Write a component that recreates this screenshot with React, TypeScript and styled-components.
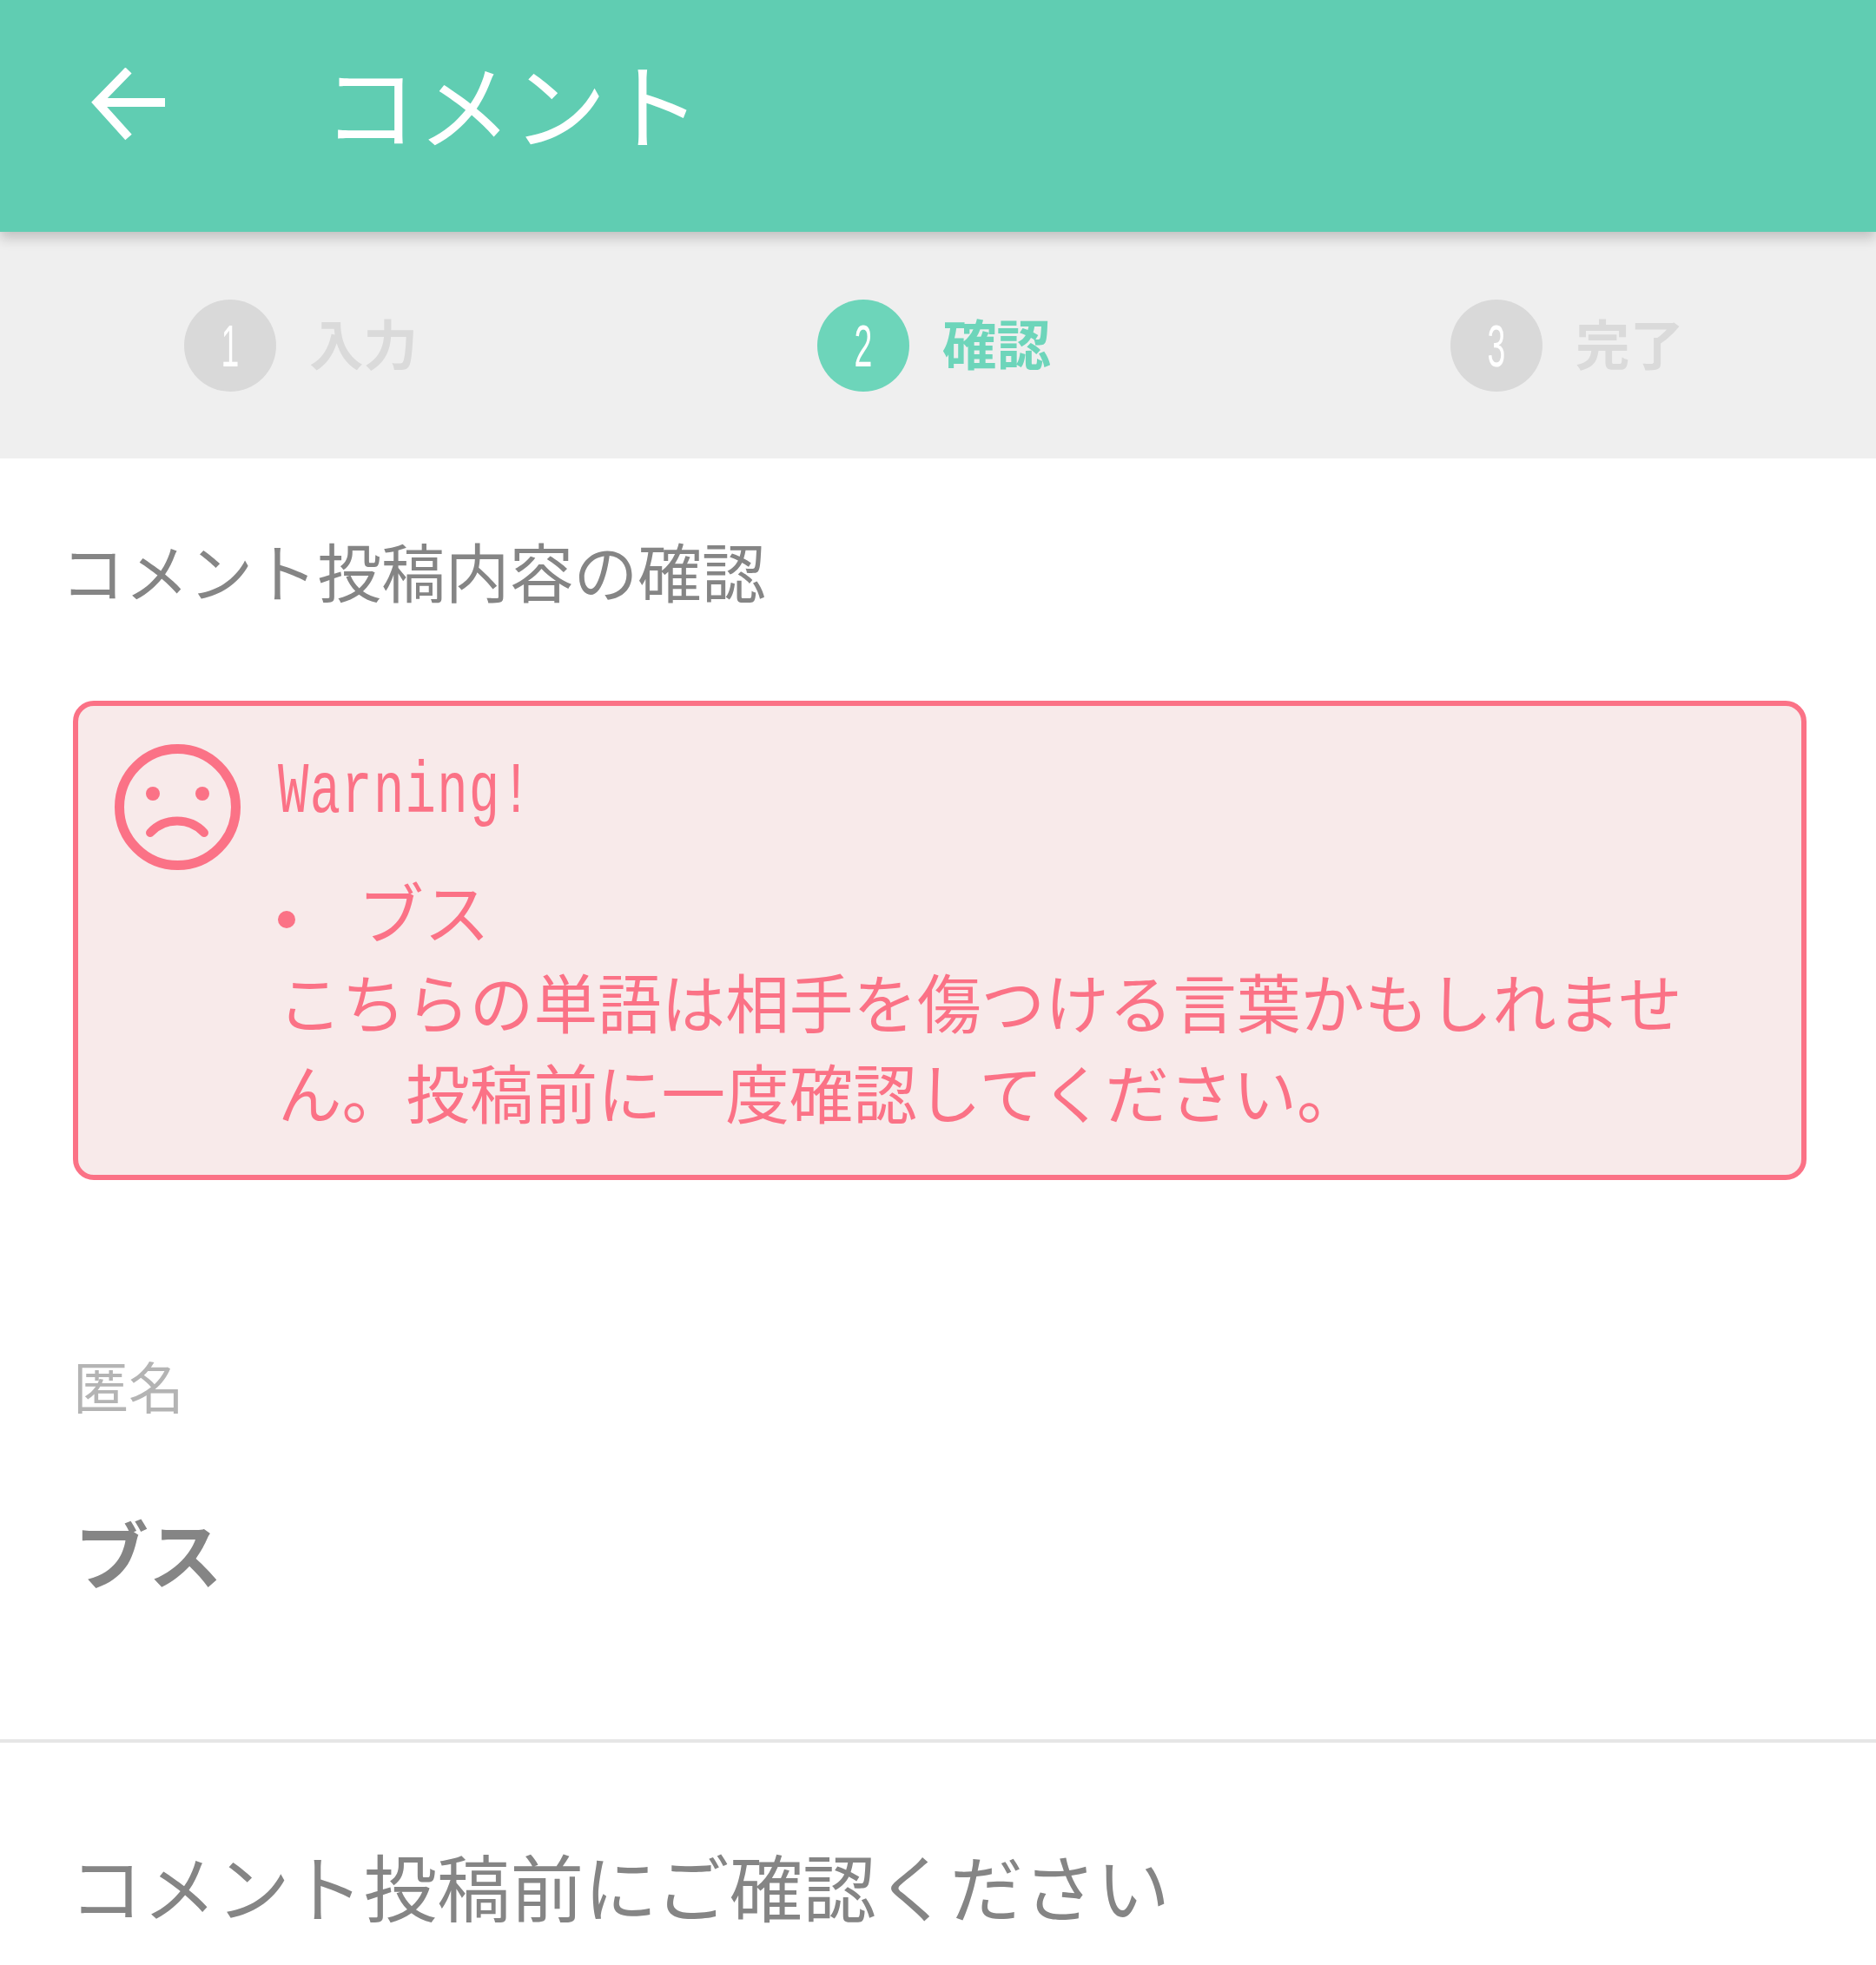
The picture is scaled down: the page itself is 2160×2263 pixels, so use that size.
import styled, { createGlobalStyle } from "styled-components";

const GlobalStyle = createGlobalStyle`
  html, body {
    margin: 0;
    padding: 0;
    background: #ffffff;
    overflow: hidden;
  }
  body {
    font-family: "Noto Sans CJK JP", "Noto Sans", sans-serif;
  }
`;

const Page = styled.div`
  width: 2160px;
  height: 2263px;
  overflow: hidden;
  background: #ffffff;
`;

const Header = styled.header`
  position: relative;
  z-index: 1;
  height: 267px;
  display: flex;
  align-items: flex-start;
  padding-left: 104px;
  background: #60cdb2;
  box-shadow: 0 7px 14px rgba(0, 0, 0, 0.2);
`;

const BackIcon = styled.svg`
  width: 90px;
  height: 90px;
  margin-top: 78px;
  flex: none;
`;

const HeaderTitle = styled.h1`
  margin: 59px 0 0 178px;
  font-size: 108px;
  line-height: 116px;
  font-weight: 400;
  color: #ffffff;
  letter-spacing: 1px;
`;

const Steps = styled.div`
  height: 261px;
  display: flex;
  align-items: center;
  gap: 461px;
  padding-left: 212px;
  background: #efefef;
`;

const Step = styled.div`
  width: 268px;
  display: flex;
  align-items: center;
  gap: 38px;
`;

const StepCircle = styled.span<{ $active?: boolean }>`
  width: 106px;
  height: 106px;
  flex: none;
  display: flex;
  align-items: center;
  justify-content: center;
  border-radius: 50%;
  background: ${(p) => (p.$active ? "#6dd5ba" : "#d9d9d9")};
  color: #ffffff;
  font-family: "Liberation Sans", sans-serif;
  font-size: 68px;
`;

const Digit = styled.span`
  display: block;
  transform: scaleX(0.55);
`;

const StepLabel = styled.span<{ $active?: boolean }>`
  margin-top: -8px;
  font-size: 62.5px;
  line-height: 70px;
  font-weight: 700;
  white-space: nowrap;
  color: ${(p) => (p.$active ? "#6dd5ba" : "#dadada")};
`;

const Content = styled.main`
  padding: 0 80px 0 76px;
`;

const SectionTitle = styled.h2`
  margin: 88px 0 0 -6px;
  font-size: 73.8px;
  line-height: 80px;
  font-weight: 400;
  color: #858585;
`;

const WarningBox = styled.section`
  box-sizing: border-box;
  width: 1996px;
  height: 552px;
  margin: 111px 0 0 8px;
  padding: 43px 70px 0 41px;
  display: flex;
  gap: 42px;
  border: 6px solid #fb7286;
  border-radius: 24px;
  background: #f8eaea;
  color: #fb7286;
`;

const Face = styled.svg`
  width: 147px;
  height: 147px;
  flex: none;
`;

const WarningBody = styled.div`
  min-width: 0;
`;

const WarningTitle = styled.div`
  margin-top: 21px;
  font-family: "Liberation Mono", "DejaVu Sans Mono", monospace;
  font-size: 83px;
  line-height: 72px;
  letter-spacing: 1.8px;
  white-space: nowrap;
  transform: scaleX(0.71);
  transform-origin: left center;
`;

const WordRow = styled.div`
  margin-top: 47px;
  display: flex;
  align-items: center;
  font-size: 76px;
  line-height: 104px;
`;

const Bullet = styled.span`
  width: 20px;
  height: 20px;
  flex: none;
  margin: 22px 72px 0 0;
  border-radius: 50%;
  background: #fb7286;
`;

const WarningText = styled.p`
  margin: 0;
  font-size: 73.6px;
  line-height: 104px;
`;

const FieldLabel = styled.div`
  margin: 195px 0 0 8px;
  font-size: 64px;
  line-height: 80px;
  color: #b4b4b4;
`;

const FieldValue = styled.div`
  margin: 108px 0 0 10px;
  font-size: 85px;
  line-height: 90px;
  font-weight: 700;
  color: #858585;
`;

const Divider = styled.hr`
  margin: 171px 0 0;
  height: 4px;
  border: 0;
  background: #e6e6e6;
`;

const NoteTitle = styled.h2`
  margin: 115px 0 0 80px;
  font-size: 84.6px;
  line-height: 96px;
  font-weight: 400;
  color: #858585;
`;

const steps = [
  { n: 1, label: "入力" },
  { n: 2, label: "確認", active: true },
  { n: 3, label: "完了" },
];

export default function App() {
  return (
    <Page>
      <GlobalStyle />
      <Header>
        <BackIcon viewBox="0 0 90 90" fill="none" stroke="#ffffff" strokeWidth="10">
          <path d="M86 40H8" />
          <path d="M44 3 8 40l36 40" />
        </BackIcon>
        <HeaderTitle>コメント</HeaderTitle>
      </Header>
      <Steps>
        {steps.map((s) => (
          <Step key={s.n}>
            <StepCircle $active={s.active}>
              <Digit>{s.n}</Digit>
            </StepCircle>
            <StepLabel $active={s.active}>{s.label}</StepLabel>
          </Step>
        ))}
      </Steps>
      <Content>
        <SectionTitle>コメント投稿内容の確認</SectionTitle>
        <WarningBox>
          <Face viewBox="0 0 147 147" fill="none" stroke="#fb7286">
            <circle cx="73.5" cy="73.5" r="67" strokeWidth="11" />
            <circle cx="45" cy="58" r="8" fill="#fb7286" stroke="none" />
            <circle cx="102" cy="58" r="8" fill="#fb7286" stroke="none" />
            <path d="M42 103c16-18 46-18 62 0" strokeWidth="10" strokeLinecap="round" />
          </Face>
          <WarningBody>
            <WarningTitle>Warning!</WarningTitle>
            <WordRow>
              <Bullet />
              ブス
            </WordRow>
            <WarningText>
              こちらの単語は相手を傷つける言葉かもしれません。投稿前に一度確認してください。
            </WarningText>
          </WarningBody>
        </WarningBox>
        <FieldLabel>匿名</FieldLabel>
        <FieldValue>ブス</FieldValue>
      </Content>
      <Divider />
      <NoteTitle>コメント投稿前にご確認ください</NoteTitle>
    </Page>
  );
}
